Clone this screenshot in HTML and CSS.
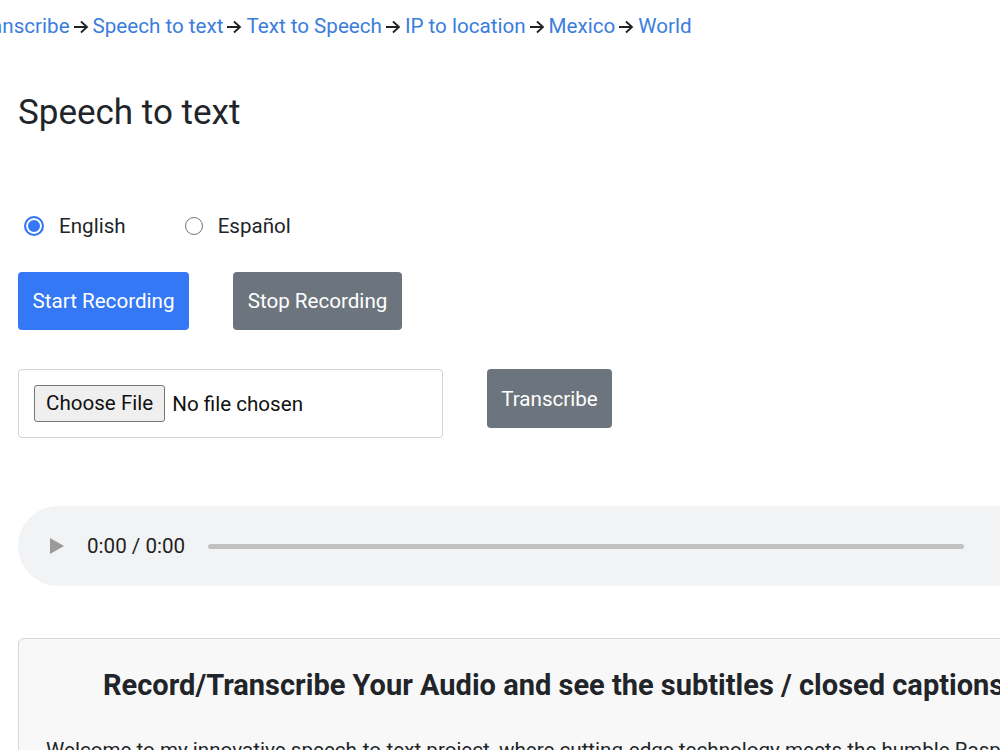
FILE: index.html
```html
<!DOCTYPE html>
<html lang="en">
<head>
    <meta charset="UTF-8">
    <meta name="viewport" content="width=device-width, initial-scale=1.0">
    <title>Speech to text</title>
    <link rel="stylesheet" href="styles.css">
</head>
<body>
    <nav class="crumbs">
        <a href="#">Transcribe</a>
        <svg class="arrow" viewBox="0 0 16 14"><path d="M1 7h13M8 1.5l6 5.5-6 5.5" fill="none" stroke="#222" stroke-width="1.8"/></svg>
        <a href="#">Speech to text</a>
        <svg class="arrow" viewBox="0 0 16 14"><path d="M1 7h13M8 1.5l6 5.5-6 5.5" fill="none" stroke="#222" stroke-width="1.8"/></svg>
        <a href="#">Text to Speech</a>
        <svg class="arrow" viewBox="0 0 16 14"><path d="M1 7h13M8 1.5l6 5.5-6 5.5" fill="none" stroke="#222" stroke-width="1.8"/></svg>
        <a href="#">IP to location</a>
        <svg class="arrow" viewBox="0 0 16 14"><path d="M1 7h13M8 1.5l6 5.5-6 5.5" fill="none" stroke="#222" stroke-width="1.8"/></svg>
        <a href="#">Mexico</a>
        <svg class="arrow" viewBox="0 0 16 14"><path d="M1 7h13M8 1.5l6 5.5-6 5.5" fill="none" stroke="#222" stroke-width="1.8"/></svg>
        <a href="#">World</a>
    </nav>

    <div class="page">
        <h1>Speech to text</h1>

        <!-- idioma -->
        <div class="langs">
            <label class="radio"><span class="dot checked"></span>English</label>
            <label class="radio"><span class="dot"></span>Español</label>
        </div>

        <div class="row">
            <button class="btn blue">Start Recording</button>
            <button class="btn gray stop">Stop Recording</button>
        </div>

        <div class="row upload">
            <div class="filebox">
                <span class="choose">Choose File</span>
                <span class="nofile">No file chosen</span>
            </div>
            <button class="btn gray transcribe">Transcribe</button>
        </div>

        <!-- reproductor -->
        <div class="player">
            <span class="play"></span>
            <span class="time">0:00 / 0:00</span>
            <span class="track"></span>
        </div>

        <div class="card">
            <h3>Record/Transcribe Your Audio and see the subtitles / closed captions</h3>
            <p>Welcome to my innovative speech-to-text project, where cutting-edge technology meets the humble Raspberry Pi.</p>
        </div>
    </div>
</body>
</html>
```

FILE: styles.css
```css
html, body {
    overflow: hidden;
}
body {
    margin: 0;
    font-family: Roboto, "Liberation Sans", sans-serif;
    color: #212529;
    background: #fff;
}
.crumbs {
    margin-left: -27px;
    padding-top: 12px;
    height: 28px;
    font-size: 20.6px;
    line-height: 28px;
    white-space: nowrap;
    display: flex;
    align-items: center;
}
.crumbs a {
    color: #3b7ddd;
    text-decoration: none;
}
.crumbs .arrow {
    width: 16px;
    height: 14px;
    margin: 2px 4px 0 3px;
}
.page {
    padding-left: 18px;
    width: 1150px;
}
h1 {
    font-size: 35px;
    font-weight: 400;
    margin: 52px 0 0;
    line-height: 42px;
}
.langs {
    display: flex;
    margin-top: 80px;
    padding-left: 6px;
    gap: 59px;
}
.radio {
    display: flex;
    align-items: center;
    font-size: 20.6px;
    line-height: 24px;
    gap: 15px;
}
.dot {
    width: 18px;
    height: 18px;
    border: 1px solid #767676;
    border-radius: 50%;
    box-sizing: border-box;
    background: #fff;
}
.dot.checked {
    border: 2px solid #3478f6;
    box-shadow: inset 0 0 0 2px #fff;
    background: #3478f6;
    width: 20px;
    height: 20px;
}
.row {
    display: flex;
    gap: 44px;
    margin-top: 34px;
    align-items: flex-start;
}
.btn {
    font-family: inherit;
    font-size: 20.6px;
    color: #fff;
    border: 0;
    border-radius: 4px;
    height: 58px;
    padding: 0;
}
.blue {
    background: #3478f6;
    width: 171px;
}
.gray {
    background: #6c757d;
}
.stop {
    width: 169px;
}
.upload {
    margin-top: 39px;
}
.transcribe {
    width: 125px;
    height: 59px;
}
.filebox {
    width: 425px;
    height: 69px;
    border: 1px solid #ced4da;
    border-radius: 4px;
    box-sizing: border-box;
    display: flex;
    align-items: center;
    padding-left: 15px;
    font-size: 20.6px;
    color: #111;
}
.choose {
    border: 1px solid #767676;
    border-radius: 3px;
    background: #efefef;
    height: 37px;
    line-height: 35px;
    box-sizing: border-box;
    padding: 0 11px;
    margin-right: 7px;
}
.player {
    margin-top: 68px;
    height: 80px;
    background: #f1f3f4;
    border-radius: 40px 0 0 40px;
    display: flex;
    align-items: center;
    padding-left: 32px;
    font-size: 20.6px;
    color: #1f1f1f;
}
.play {
    width: 0;
    height: 0;
    border-left: 14px solid #9a9a9a;
    border-top: 8px solid transparent;
    border-bottom: 8px solid transparent;
    margin-right: 23px;
}
.track {
    width: 756px;
    height: 5px;
    border-radius: 3px;
    background: #c1c1c1;
    margin-left: 23px;
}
.card {
    margin-top: 52px;
    background: #f8f8f8;
    border: 1px solid #d6d6d6;
    border-radius: 6px;
    padding: 28px 27px 0;
    height: 200px;
}
.card h3 {
    font-size: 29px;
    font-weight: 700;
    margin: 0;
    padding-left: 57px;
    line-height: 36px;
    white-space: nowrap;
}
.card p {
    font-size: 20.6px;
    margin: 35px 0 0;
    white-space: nowrap;
}
```
